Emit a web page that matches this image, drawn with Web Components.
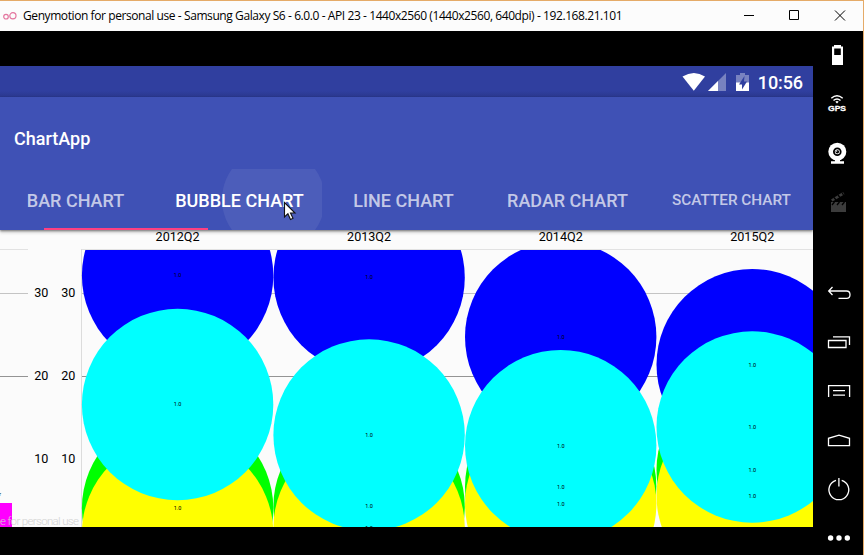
<!DOCTYPE html>
<html lang="en">
<head>
<meta charset="utf-8">
<title>Genymotion</title>
<style>
html,body{margin:0;padding:0;width:864px;height:555px;overflow:hidden;background:#000}
</style>
</head>
<body>
<emulator-window>
  <title-bar slot="title">Genymotion for personal use - Samsung Galaxy S6 - 6.0.0 - API 23 - 1440x2560 (1440x2560, 640dpi) - 192.168.21.101</title-bar>
  <status-bar slot="screen">10:56</status-bar>
  <app-header slot="screen" heading="ChartApp">
    <app-tab>BAR CHART</app-tab>
    <app-tab active>BUBBLE CHART</app-tab>
    <app-tab>LINE CHART</app-tab>
    <app-tab>RADAR CHART</app-tab>
    <app-tab small>SCATTER CHART</app-tab>
  </app-header>
  <bubble-chart slot="screen"></bubble-chart>
  <tool-rail slot="rail"></tool-rail>
</emulator-window>
<script>
const define = (name, html, setup) => customElements.define(name, class extends HTMLElement {
  connectedCallback() {
    if (this.shadowRoot) return;
    const t = document.createElement('template');
    t.innerHTML = html;
    this.attachShadow({ mode: 'open' }).appendChild(t.content.cloneNode(true));
    if (setup) setup(this, this.shadowRoot);
  }
});

define('emulator-window', `
<style>
:host{display:flex;flex-direction:column;box-sizing:border-box;width:864px;height:555px;border-top:1px solid #e5ab68;border-right:1px solid #e5ab68;background:#000;overflow:hidden}
.body{display:flex;flex:1;min-height:0}
.screen{width:813px;height:461px;margin-top:35px;display:flex;flex-direction:column;overflow:hidden;background:#fbfbfb}
</style>
<slot name="title"></slot>
<div class="body"><div class="screen"><slot name="screen"></slot></div><slot name="rail"></slot></div>`);

define('title-bar', `
<style>
:host{display:flex;align-items:center;height:30px;flex:none;background:#fcfcfc;color:#000;font:12px/30px "Open Sans","Noto Sans",sans-serif}
.logo{width:14px;height:10px;margin:0 6px 0 3px;flex:none}
.text{white-space:nowrap;letter-spacing:-.415px;flex:1}
.buttons{width:138px;height:30px;flex:none}
svg{fill:none;display:block}
</style>
<svg class="logo" viewBox="0 0 14 10" stroke="#e4769f" stroke-width="1.2"><circle cx="3" cy="5.7" r="2.3"/><circle cx="9.9" cy="4.8" r="3.1"/></svg>
<span class="text"><slot></slot></span>
<svg class="buttons" viewBox="0 0 138 30" stroke="#000"><path d="M19 14.5h10"/><path d="M64.500 9.500h9v9h-9z"/><path d="M110 9.500l10 10M120 9.500l-10 10"/></svg>`);

define('status-bar', `
<style>
:host{display:flex;justify-content:flex-end;align-items:center;box-sizing:border-box;flex:none;height:31px;padding-right:10px;color:#fff;font:500 18px/31px Roboto,sans-serif;background:linear-gradient(#303f9f 0 25px,#2c3a93 29px,#2a378c 31px)}
svg{display:block;width:76px;height:31px}
span{padding-top:2px;letter-spacing:-.1px}
</style>
<svg viewBox="682 66 76 31" fill="#fff">
<path d="M682.500 76.500Q694 69.500 705 76.500L693.800 90.800Z"/>
<path d="M726 73v18h-18z" opacity=".35"/><path d="M718 81v10h-10z"/>
<path d="M740 73h5v2h4v8.500h-13V75h4z" opacity=".35"/><path d="M736 82.500h13V91h-13z"/>
<path d="M744.500 76l-5.500 8.500h3V89.500l5-8h-3z" fill="#303f9f"/>
</svg><span><slot></slot></span>`);

define('app-header', `
<style>
:host{display:flex;flex-direction:column;box-sizing:border-box;flex:none;height:133px;background:#3f51b5;position:relative;z-index:2;box-shadow:0 1px 2px rgba(0,0,0,.45),0 3px 3px rgba(0,0,0,.14);font-family:Roboto,sans-serif}
h1{margin:0;padding:12px 0 0 14px;box-sizing:border-box;height:72px;font:500 18px/60px Roboto,sans-serif;color:#fff}
nav{display:grid;grid-template-columns:repeat(5,164px);margin-left:-6.500px;height:61px}
.line{position:absolute;left:43.500px;bottom:0;width:164px;height:2px;background:#ff4081}
.cursor{position:absolute;left:283px;top:104px;width:14px;height:20px}
</style>
<h1></h1><nav><slot></slot></nav><div class="line"></div>
<svg class="cursor" viewBox="0 0 14 20"><path d="M1.500 1.500V16L4.900 12.800 7.500 18.500 10 17.300 7.500 12H12z" fill="#fff" stroke="#111" stroke-width="1.100"/></svg>`,
(el, root) => { root.querySelector('h1').textContent = el.getAttribute('heading'); });

define('app-tab', `
<style>
:host{display:flex;align-items:center;justify-content:center;position:relative;height:61px;overflow:hidden;color:rgba(255,255,255,.7);font:500 18px/22px Roboto,sans-serif;white-space:nowrap}
:host([active]){color:#fff}
:host([small]){font-size:15.300px}
:host([active])::before{content:"";position:absolute;left:64px;top:-21px;width:103px;height:103px;border-radius:50%;background:rgba(255,255,255,.07)}
span{position:relative;padding-top:2px}
:host([small]) span{padding-top:1px}
</style><span><slot></slot></span>`);

define('bubble-chart', `
<style>
:host{display:block;height:297px;flex:none}
svg{display:block;width:813px;height:297px;font-family:Roboto,sans-serif}
</style>
<svg viewBox="0 230 813 297">
<defs><clipPath id="plot"><rect x="81" y="250" width="732" height="277"/></clipPath></defs>
<g stroke-width="1" fill="none">
<path d="M0 249.500H28M81 249.500H813" stroke="#e2e2e2"/>
<path d="M0 293.500H28M82 293.500H813" stroke="#c4c4c4"/>
<path d="M0 376.500H28M82 376.500H813" stroke="#949494"/>
<path d="M81.500 249V527" stroke="#dcdcdc"/>
</g>
<rect x="0" y="503" width="12" height="24" fill="#f0f"/>
<text x="-1" y="496" font-size="6">r</text>
<text x="0" y="524.500" font-size="11.500" fill="#d2d2d2" textLength="79" lengthAdjust="spacing" font-weight="300">e for personal use</text>
<g id="bubbles" clip-path="url(#plot)"></g>
<g id="values" font-size="5.500" text-anchor="middle"></g>
<g id="axis" font-size="12.600" text-anchor="middle"></g>
</svg>`, (el, root) => {
  const xs = [177.6, 369.1, 560.7, 752.2];
  const years = ['2012Q2', '2013Q2', '2014Q2', '2015Q2'];
  const series = [
    ['#00f', [275.5, 277.5, 337, 364.7]],
    ['#0f0', [508.2, 506.5, 486.7, 470]],
    ['#ff0', [533, 527.7, 504, 495.700]],
    ['#0ff', [404.5, 435, 445.7, 427]]
  ];
  let circles = '', values = '', axis = '';
  for (const [color, ys] of series) ys.forEach((y, i) => {
    circles += `<circle cx="${xs[i]}" cy="${y}" r="95.700" fill="${color}"/>`;
    if (y < 530) values += `<text x="${xs[i]}" y="${y + 1.8}">1.0</text>`;
  });
  years.forEach((t, i) => axis += `<text x="${xs[i]}" y="241">${t}</text>`);
  [[30, 297], [20, 380], [10, 463]].forEach(([t, y]) => {
    axis += `<text x="41.300" y="${y}">${t}</text><text x="68.300" y="${y}">${t}</text>`;
  });
  root.getElementById('bubbles').innerHTML = circles;
  root.getElementById('values').innerHTML = values;
  root.getElementById('axis').innerHTML = axis;
});

define('tool-rail', `
<style>
:host{display:flex;flex-direction:column;width:50px;height:524px;overflow:hidden;background:#000}
svg{display:block;width:50px;height:49px;flex:none;fill:none;stroke:none}
.line{stroke:#fff;stroke-width:1.300}
.nav{margin-top:42px}
</style>
<svg viewBox="813 31 50 49"><path fill="#fff" fill-rule="evenodd" d="M834 45h7v1.500h2V65h-11V46.500h2zM834.200 48.500v6.500h6.600v-6.500z"/></svg>
<svg viewBox="813 80 50 49"><g stroke="#fff" stroke-width="1.400"><path d="M831.300 98.300Q837 93 842.700 98.300"/><path d="M833.500 100.600Q837 97.200 840.500 100.600"/></g><path d="M835.300 101.800Q837 100.300 838.700 101.800L837 103.400z" fill="#fff"/><text x="828" y="111.300" fill="#fff" font-family="Liberation Sans,sans-serif" font-weight="700" font-size="8" stroke="#fff" stroke-width=".3" textLength="18" lengthAdjust="spacingAndGlyphs">GPS</text></svg>
<svg viewBox="813 129 50 49"><circle cx="837.300" cy="151.700" r="9" fill="#fff"/><path d="M835 160h5v1.200h4v2.500h-13v-2.500h4z" fill="#fff"/><circle cx="837.300" cy="151.700" r="3.400" stroke="#000" stroke-width="1.800" fill="#fff"/><circle cx="837.300" cy="151.700" r="1.800" fill="#000"/><circle cx="836.600" cy="151" r=".8" fill="#fff"/></svg>
<svg viewBox="813 178 50 49"><path d="M831 202h15v10h-15z" fill="#3c3c3c"/><path d="M831 199.500l12-7.500 1.500 2.200-12 7.300z" fill="#3c3c3c"/><path d="M832 205l2.500-3M837 205l2.500-3M842 205l2.500-3M834 197.500l2 2.500M838 195l2 2.500M842 192.500l1.500 2.500" stroke="#000" stroke-width="1.300"/></svg>
<svg class="nav line" viewBox="813 269 50 49"><path d="M832.500 287L828.700 291 832.500 295M828.700 291H846.500Q850 291 850 294.700T846.500 298.300H838.500"/></svg>
<svg class="line" viewBox="813 318 50 49"><path d="M828.500 340.500h17.500v7h-17.500zM833 336.900h16.500v8"/></svg>
<svg class="line" viewBox="813 367 50 49"><path d="M828.600 397v-11.300h21V397M833 390.700h12M833 395.200h12"/></svg>
<svg class="line" viewBox="813 416 50 49"><path d="M828.500 445.600v-7.300l10.500-3.200 10.500 3.200v7.300z"/></svg>
<svg class="line" viewBox="813 465 50 49"><path d="M836 480.300A9.900 9.900 0 1 0 841.700 480.300M838.900 478v8.500"/></svg>
<svg viewBox="813 514 50 49"><g fill="#fff"><circle cx="830.600" cy="538" r="2.700"/><circle cx="839" cy="538" r="2.700"/><circle cx="847.300" cy="538" r="2.700"/></g></svg>`);
</script>
</body>
</html>
